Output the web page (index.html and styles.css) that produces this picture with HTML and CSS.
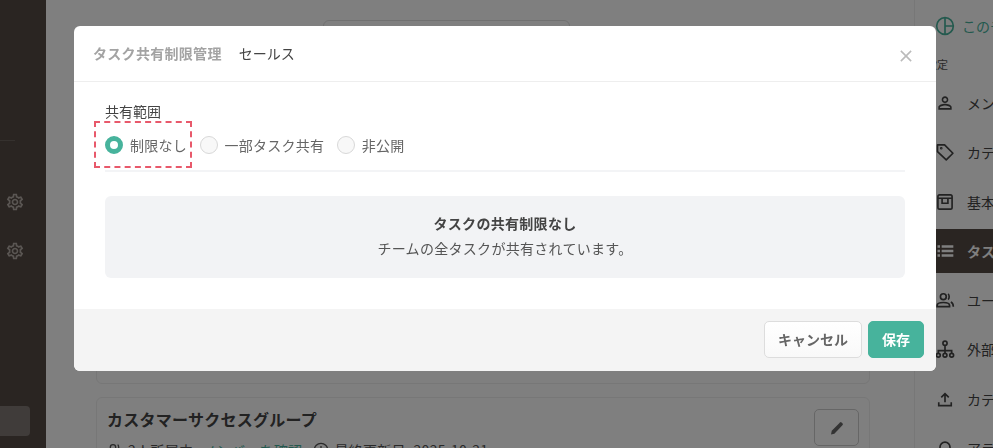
FILE: index.html
```html
<!DOCTYPE html>
<html lang="ja">
<head>
    <meta charset="UTF-8">
    <meta name="viewport" content="width=device-width, initial-scale=1.0">
    <title>タスク共有制限管理</title>
    <link rel="stylesheet" href="styles.css">
</head>
<body>
    <div class="page">
        <aside class="side">
            <div class="side-line"></div>
            <svg class="gear" viewBox="0 0 24 24"><use href="#gear"/></svg>
            <svg class="gear" viewBox="0 0 24 24"><use href="#gear"/></svg>
            <div class="side-box"></div>
        </aside>

        <main class="main">
            <div class="search"></div>
            <div class="card card-hidden"></div>
            <div class="card">
                <div class="card-top">
                    <h2>カスタマーサクセスグループ</h2>
                    <button class="edit">
                        <svg viewBox="0 0 24 24"><path d="M4 20.500l1-5L16 4.500a1.500 1.500 0 0 1 2 0l1.500 1.500a1.500 1.500 0 0 1 0 2L8.500 19.500z"/></svg>
                    </button>
                </div>
                <div class="meta">
                    <svg viewBox="0 0 24 24"><circle cx="9" cy="8" r="4"/><path d="M2 20c0-4 4-5 7-5s7 1 7 5M16 4c2 1 2 7 0 8M19 15c2 1 3 3 3 5"/></svg>
                    <span>2人所属中</span>
                    <a>メンバーを確認</a>
                    <svg viewBox="0 0 24 24"><circle cx="12" cy="12" r="10"/><path d="M12 6v6l4 2"/></svg>
                    <span>最終更新日: 2025-10-21</span>
                </div>
            </div>
        </main>

        <nav class="panel">
            <div class="brand">
                <svg viewBox="0 0 24 24"><circle cx="12" cy="12" r="10"/><path d="M12 2v20M12 12h10"/></svg>
                <span>このチームを見る</span>
            </div>
            <div class="panel-label">設定</div>
            <div class="row">
                <svg viewBox="0 0 24 24"><path class="solid" d="M12 5.9c1.16 0 2.1.94 2.1 2.1s-.94 2.1-2.1 2.1S9.9 9.16 9.9 8s.94-2.1 2.1-2.1m0 9c2.97 0 6.1 1.46 6.1 2.1v1.1H5.9V17c0-.64 3.13-2.1 6.1-2.1M12 4C9.79 4 8 5.79 8 8s1.79 4 4 4 4-1.79 4-4-1.79-4-4-4zm0 9c-2.67 0-8 1.34-8 4v3h16v-3c0-2.66-5.33-4-8-4z"/></svg>
                <span>メンバー</span>
            </div>
            <div class="row">
                <svg viewBox="0 0 24 24"><path d="M3 3.500h8.500l10 10-8 8-10.500-10z" stroke-linejoin="round"/><circle cx="7.500" cy="7.500" r=".6"/></svg>
                <span>カテゴリー</span>
            </div>
            <div class="row">
                <svg viewBox="0 0 24 24"><rect x="3.500" y="3.500" width="17" height="17" rx="2"/><path d="M3.500 7.500h17M8.500 7.500v6h7v-6"/></svg>
                <span>基本情報</span>
            </div>
            <div class="row row-active">
                <svg viewBox="0 0 24 24"><path class="solid" d="M3 5h3v3H3zM8 5h14v3H8zM3 10.500h3v3H3zM8 10.500h14v3H8zM3 16h3v3H3zM8 16h14v3H8z"/></svg>
                <span>タスク共有</span>
            </div>
            <div class="row">
                <svg viewBox="0 0 24 24"><circle cx="10" cy="8" r="3.500"/><path d="M2.500 20v-1.500c0-2.500 4-3.500 7.500-3.500s7.500 1 7.500 3.500V20zM15.500 4.800c2 .6 2 5.800 0 6.400M19 14.500c1.800.8 3 2.200 3 5.500"/></svg>
                <span>ユーザー</span>
            </div>
            <div class="row">
                <svg viewBox="0 0 24 24"><circle cx="12" cy="5" r="2.500"/><circle cx="4" cy="19.500" r="2.300"/><circle cx="12" cy="19.500" r="2.300"/><circle cx="20" cy="19.500" r="2.300"/><path d="M12 7.500v9.700M4 17v-3h16v3"/></svg>
                <span>外部連携</span>
            </div>
            <div class="row">
                <svg viewBox="0 0 24 24"><path d="M12 16V6M7.500 10 12 5.500 16.500 10M4.500 16v4h15v-4"/></svg>
                <span>カテゴリ設定</span>
            </div>
            <div class="row">
                <svg viewBox="0 0 24 24"><path d="M6 17v-6a6 6 0 0 1 12 0v6M4 17h16M10 20h4"/></svg>
                <span>アラート</span>
            </div>
        </nav>
    </div>

    <div class="backdrop"></div>

    <div class="modal">
        <div class="modal-head">
            <span class="modal-title">タスク共有制限管理</span>
            <span class="modal-team">セールス</span>
            <svg class="close" viewBox="0 0 14 14"><path d="M1 1l12 12M13 1L1 13"/></svg>
        </div>
        <div class="modal-body">
            <div class="scope-label">共有範囲</div>
            <div class="radios">
                <label class="radio"><i class="dot dot-on"></i>制限なし</label>
                <label class="radio"><i class="dot"></i>一部タスク共有</label>
                <label class="radio"><i class="dot"></i>非公開</label>
                <div class="dashed"></div>
            </div>
            <div class="info">
                <strong>タスクの共有制限なし</strong>
                <p>チームの全タスクが共有されています。</p>
            </div>
        </div>
        <div class="modal-foot">
            <button class="btn btn-cancel">キャンセル</button>
            <button class="btn btn-save">保存</button>
        </div>
    </div>

    <svg class="defs" width="0" height="0">
        <symbol id="gear" viewBox="0 0 24 24">
            <path d="M19.43 12.98c.04-.32.07-.64.07-.98 0-.34-.03-.66-.07-.98l2.11-1.65c.19-.15.24-.42.12-.64l-2-3.46c-.09-.16-.26-.25-.44-.25-.06 0-.12.01-.17.03l-2.49 1c-.52-.4-1.08-.73-1.69-.98l-.38-2.65C14.46 2.18 14.25 2 14 2h-4c-.25 0-.46.18-.49.42l-.38 2.65c-.61.25-1.17.59-1.69.98l-2.49-1c-.06-.02-.12-.03-.18-.03-.17 0-.34.09-.43.25l-2 3.46c-.13.22-.07.49.12.64l2.11 1.65c-.04.32-.07.65-.07.98 0 .33.03.66.07.98l-2.11 1.65c-.19.15-.24.42-.12.64l2 3.46c.09.16.26.25.44.25.06 0 .12-.01.17-.03l2.49-1c.52.4 1.08.73 1.69.98l.38 2.65c.03.24.24.42.49.42h4c.25 0 .46-.18.49-.42l.38-2.65c.61-.25 1.17-.59 1.69-.98l2.49 1c.06.02.12.03.18.03.17 0 .34-.09.43-.25l2-3.46c.12-.22.07-.49-.12-.64l-2.11-1.65zM17.45 11.27c.04.31.05.52.05.73 0 .21-.02.43-.05.73l-.14 1.13.89.7 1.08.84-.7 1.21-1.27-.51-1.04-.42-.9.68c-.43.32-.84.56-1.25.73l-1.06.43-.16 1.13-.2 1.35h-1.4l-.19-1.35-.16-1.13-1.06-.43c-.43-.18-.83-.41-1.23-.71l-.91-.7-1.06.43-1.27.51-.7-1.21 1.08-.84.89-.7-.14-1.13c-.03-.31-.05-.54-.05-.74s.02-.43.05-.73l.14-1.13-.89-.7-1.08-.84.7-1.21 1.27.51 1.04.42.9-.68c.43-.32.84-.56 1.25-.73l1.06-.43.16-1.13.2-1.35h1.39l.19 1.35.16 1.13 1.06.43c.43.18.83.41 1.23.71l.91.7 1.06-.43 1.27-.51.7 1.21-1.07.85-.89.7.14 1.13zM12 8c-2.21 0-4 1.79-4 4s1.79 4 4 4 4-1.79 4-4-1.79-4-4-4zm0 6c-1.1 0-2-.9-2-2s.9-2 2-2 2 .9 2 2-.9 2-2 2z"/>
        </symbol>
    </svg>
</body>
</html>
```

FILE: styles.css
```css
* {
    box-sizing: border-box;
}
body {
    margin: 0;
    height: 448px;
    overflow: hidden;
    background-color: white;
    color: #333;
    font-family: "Noto Sans CJK JP", "Noto Sans", sans-serif;
    font-size: 14px;
}
svg {
    display: block;
    flex-shrink: 0;
}
.defs {
    position: absolute;
}
.page {
    display: flex;
    height: 448px;
    overflow: hidden;
}

/* left sidebar */
.side {
    width: 46px;
    flex-shrink: 0;
    height: 448px;
    background-color: #544a44;
    display: flex;
    flex-direction: column;
}
.side-line {
    width: 15px;
    height: 1px;
    margin-top: 140px;
    background-color: #6a625d;
}
.gear {
    width: 20px;
    height: 20px;
    margin: 0 0 29px 5px;
    fill: #b5aca6;
}
.gear:first-of-type {
    margin-top: 51px;
}
.side-box {
    width: 30px;
    height: 30px;
    margin-top: 116px;
    border-radius: 0 4px 4px 0;
    background-color: #807874;
}

/* main column */
.main {
    width: 868px;
    flex-shrink: 0;
    padding: 20px 44px 0 50px;
}
.search {
    width: 247px;
    height: 44px;
    margin: 0 0 16px 227px;
    border: 1px solid #e0e0e0;
    border-radius: 6px;
}
.card {
    padding: 11px 10px;
    border: 1px solid #eee;
    border-radius: 6px;
}
.card-hidden {
    height: 304px;
    margin-bottom: 13px;
}
.card-top {
    display: flex;
    justify-content: space-between;
    align-items: flex-start;
    height: 37px;
}
.card-top h2 {
    margin: 0;
    font-size: 16px;
    line-height: 20px;
    letter-spacing: 0.25px;
    color: #444;
}
.edit {
    width: 45px;
    height: 37px;
    padding: 0;
    display: flex;
    align-items: center;
    justify-content: center;
    background: none;
    border: 1px solid #ccc;
    border-radius: 5px;
}
.edit svg {
    width: 18px;
    height: 18px;
    fill: #666;
}
.meta {
    display: flex;
    align-items: center;
    margin-top: -8px;
    height: 24px;
    letter-spacing: 0.3px;
    color: #555;
}
.meta svg {
    width: 16px;
    height: 16px;
    margin-right: 5px;
    fill: none;
    stroke: #555;
    stroke-width: 2;
}
.meta a {
    color: #47b39c;
    margin: 0 11px 0 9px;
}

/* right settings panel */
.panel {
    width: 240px;
    flex-shrink: 0;
    height: 448px;
    padding-top: 16px;
    border-left: 1px solid #eee;
    color: #444;
}
.panel svg {
    width: 20px;
    height: 20px;
    fill: none;
    stroke: currentColor;
    stroke-width: 2;
}
.panel svg .solid {
    fill: currentColor;
    stroke: none;
}
.brand {
    display: flex;
    align-items: center;
    gap: 7px;
    height: 20px;
    padding-left: 20px;
    color: #47b39c;
    font-size: 14px;
}
.panel-label {
    margin-top: 21px;
    padding-left: 11px;
    font-size: 11px;
    line-height: 14px;
    color: #555;
}
.row {
    display: flex;
    align-items: center;
    gap: 12px;
    height: 44px;
    margin-top: 5.300px;
    padding-left: 20px;
    white-space: nowrap;
}
.panel-label + .row {
    margin-top: 10px;
}
.row-active {
    background-color: #544a44;
    color: white;
    font-weight: 700;
}

/* modal over a dimmed page */
.backdrop {
    position: fixed;
    inset: 0;
    background-color: rgba(0, 0, 0, 0.5);
}
.modal {
    position: fixed;
    left: 74px;
    top: 26px;
    width: 862px;
    height: 345px;
    display: flex;
    flex-direction: column;
    background-color: white;
    border-radius: 6px;
    overflow: hidden;
}
.modal-head {
    height: 56px;
    flex-shrink: 0;
    display: flex;
    align-items: center;
    padding: 0 24px 2px 19px;
    border-bottom: 1px solid #eee;
}
.modal-title {
    color: #a3a3a3;
    font-weight: 700;
    letter-spacing: 0.3px;
}
.modal-team {
    margin-left: 17px;
    color: #444;
}
.close {
    width: 12px;
    height: 12px;
    margin: 6px 0 0 auto;
    fill: none;
    stroke: #bbb;
    stroke-width: 1.800;
}
.modal-body {
    flex: 1;
    padding: 19px 31px 0;
}
.scope-label {
    line-height: 20px;
    color: #444;
}
.radios {
    position: relative;
    display: flex;
    align-items: center;
    gap: 12.500px;
    height: 51px;
    padding-bottom: 2px;
    border-bottom: 2px solid #f3f4f6;
    letter-spacing: 0.25px;
    color: #666;
}
.radio {
    display: flex;
    align-items: center;
    gap: 7px;
}
.dot {
    width: 18px;
    height: 18px;
    border: 1.500px solid #d8d8d8;
    border-radius: 50%;
    background-color: #f8f8f8;
}
.dot-on {
    border: 5px solid #47b39c;
    background-color: white;
}
.dashed {
    position: absolute;
    left: -11px;
    top: 0;
    width: 98px;
    height: 47px;
    border: 2px dashed #e8596b;
}
.info {
    height: 82px;
    margin-top: 24px;
    padding-top: 15px;
    border-radius: 6px;
    background-color: #f2f3f5;
    text-align: center;
    line-height: 25px;
    letter-spacing: 0.3px;
    color: #444;
}
.info strong {
    display: block;
}
.info p {
    margin: 0;
    color: #555;
}
.modal-foot {
    height: 62px;
    flex-shrink: 0;
    display: flex;
    justify-content: flex-end;
    align-items: flex-start;
    gap: 6px;
    padding: 12px 12px 0;
    background-color: #f4f4f4;
}
.btn {
    height: 37px;
    border-radius: 5px;
    font-family: inherit;
    font-size: 14px;
    font-weight: 700;
    padding: 0 0 2px;
}
.btn-cancel {
    width: 98px;
    color: #666;
    border: 1px solid #ddd;
    background: linear-gradient(#fff, #f9f9f9);
}
.btn-save {
    width: 56px;
    color: white;
    border: 1px solid #47b39c;
    background-color: #47b39c;
}
```
